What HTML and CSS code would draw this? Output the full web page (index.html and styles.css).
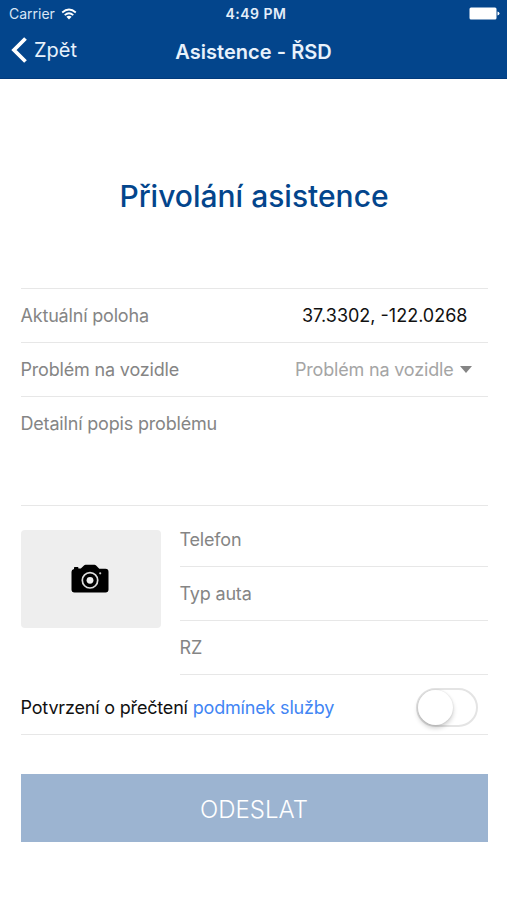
FILE: index.html
```html
<!DOCTYPE html>
<html lang="cs">
<head>
<meta charset="utf-8">
<title>Asistence - ŘSD</title>
<link rel="stylesheet" href="styles.css">
</head>
<body>
<header class="header">
  <div class="status">
    <div class="carrier"><span class="carrier-name">Carrier</span>
      <svg class="wifi" viewBox="0 0 16 12" width="16" height="12" fill="none" stroke="#fff" stroke-width="1.8"><path d="M1.2 4.5Q8-1.4 14.8 4.5M3.7 7.1Q8 3.4 12.3 7.1"/><path d="M5.4 8.8Q8 6.7 10.6 8.8L8 11.4Z" fill="#fff" stroke="none"/></svg>
    </div>
    <span class="time">4:49 PM</span>
    <svg class="battery" viewBox="0 0 31 13" width="31" height="13" fill="#fff"><rect x=".5" y=".5" width="27" height="12" rx="1.5"/><path d="M28.5 4.5q2 .3 2 2t-2 2z"/></svg>
  </div>
  <nav class="nav">
    <a class="back"><svg viewBox="0 0 17 28" width="17" height="28" fill="none" stroke="#fff" stroke-width="3.8"><path d="M14.5 2.5 3 14l11.5 11.5"/></svg><span class="back-label">Zpět</span></a>
    <span class="nav-title">Asistence - ŘSD</span>
  </nav>
</header>
<main class="content">
  <h1 class="title">Přivolání asistence</h1>
  <div class="row first"><span>Aktuální poloha</span><span class="coords">37.3302, -122.0268</span></div>
  <div class="row"><span>Problém na vozidle</span><span class="select"><span>Problém na vozidle</span><svg viewBox="0 0 12 7" width="12" height="7"><path d="M0 0h12L6 7z" fill="#858585"/></svg></span></div>
  <div class="row detail"><span>Detailní popis problému</span></div>
  <div class="vehicle">
    <div class="photo"><svg viewBox="0 0 38 30" width="38" height="30"><path d="M3 5V3.7q0-.7.7-.7h3q.7 0 .7.7V4.5h2.4L13 1.4Q13.7.8 14.6.8h8.9q.9 0 1.6.7l2.7 2.8q.4.5 1.1.5H34.5q3 0 3 3v17.6q0 3-3 3H3.5q-3 0-3-3V7.8Q.5 5.4 3 5z"/><circle cx="19" cy="16.3" r="7.7" fill="none" stroke="#dedede" stroke-width="1.7"/><circle cx="19" cy="16.3" r="3.4" fill="#eee"/><circle cx="29.2" cy="9.3" r="1.1" fill="#ccc"/></svg></div>
    <div class="fields">
      <div class="field"><span>Telefon</span></div>
      <div class="field"><span>Typ auta</span></div>
      <div class="field"><span>RZ</span></div>
    </div>
  </div>
  <div class="consent"><span>Potvrzení o přečtení <a class="link">podmínek služby</a></span><span class="switch"><span class="knob"></span></span></div>
  <button class="submit">ODESLAT</button>
</main>
</body>
</html>
```
FILE: styles.css
```css
* { box-sizing: border-box; }
body { margin: 0; background: #fff; font-family: Inter, "Liberation Sans", sans-serif; font-size: 18px; letter-spacing: -.18px; color: #858585; }
span, a { white-space: nowrap; }
svg { display: block; flex: none; }
.header { height: 79px; background: #03458c; color: #fff; border-bottom: 1px solid #023a7c; letter-spacing: 0; }
.status { height: 27px; padding: 0 7px 0 9px; display: grid; grid-template-columns: 1fr auto 1fr; align-items: center; font-size: 14px; }
.carrier { display: flex; align-items: center; gap: 6px; color: #d9e6f5; }
.time { font-weight: 600; font-size: 14px; letter-spacing: .5px; color: #e4eefa; margin-left: 3px; }
.battery { justify-self: end; }
.nav { height: 50px; padding: 0 12px; display: grid; grid-template-columns: 1fr auto 1fr; align-items: center; }
.back { display: flex; align-items: center; gap: 6px; margin-left: -1px; font-size: 20px; padding-bottom: 5px; color: #e8f2fc; }
.nav-title { font-size: 20px; font-weight: 600; letter-spacing: .05px; color: #e8f2fc; }
.content { padding: 0 19.5px 0 20.5px; }
.title { margin: 0; height: 209px; padding-top: 97px; line-height: 40px; text-align: center; font-size: 30px; font-weight: 500; letter-spacing: 0; color: #03458c; }
.row, .field { height: 54.2px; display: flex; align-items: center; justify-content: space-between; border-bottom: 1px solid #e7e7e7; }
.first { height: 55px; border-top: 1px solid #e7e7e7; }
.coords { color: #111; letter-spacing: 0; margin-right: 20px; }
.select { display: flex; align-items: center; gap: 6px; margin-right: 16px; color: #a5a5a5; }
.detail { height: 109px; align-items: flex-start; padding-top: 16px; }
.vehicle { display: flex; gap: 19px; }
.photo { width: 140px; height: 98px; margin-top: 24px; padding-right: 1px; border-radius: 4px; background: #eee; display: flex; align-items: center; justify-content: center; }
.fields { flex: 1; padding-top: 6.4px; }
.consent { height: 60px; display: flex; align-items: center; justify-content: space-between; border-bottom: 1px solid #e7e7e7; padding-top: 6px; color: #111; }
.link { color: #4285f4; }
.switch { width: 62px; height: 39px; margin-right: 10px; border: 2px solid #e4e4e4; border-radius: 20px; }
.knob { display: block; width: 35px; height: 35px; border-radius: 50%; background: #fff; box-shadow: 0 3px 5px rgba(0,0,0,.2), 0 0 2px rgba(0,0,0,.12); }
.submit { display: flex; align-items: center; justify-content: center; width: 100%; height: 68px; margin-top: 39px; border: 0; padding: 2px 0 0; background: #9cb4d1; color: #fff; font: 300 24px Inter, sans-serif; letter-spacing: 0; }
```
